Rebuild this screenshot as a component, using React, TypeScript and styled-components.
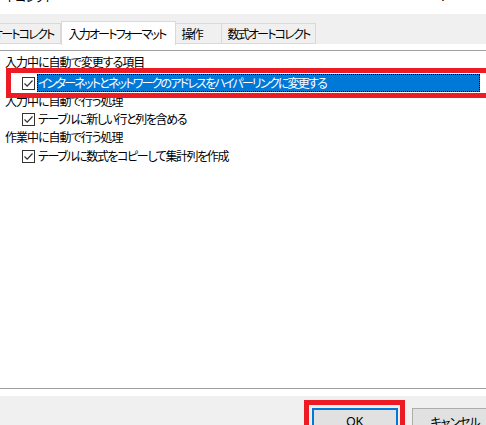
import React from 'react';
import styled, {createGlobalStyle} from 'styled-components';

const GlobalStyle = createGlobalStyle`
  html, body {
    margin: 0;
    padding: 0;
    width: 486px;
    height: 425px;
    overflow: hidden;
    background: #ffffff;
  }
  body {
    font-family: "Noto Sans CJK JP", "Liberation Sans", sans-serif;
    font-size: 12px;
    letter-spacing: -1px;
    color: #000000;
    font-feature-settings: "palt";
  }
`;

const Dialog = styled.div`
  width: 486px;
  height: 425px;
  display: flex;
  flex-direction: column;
  overflow: hidden;
`;

const TitleBar = styled.div`
  height: 14px;
  flex: none;
  display: flex;
  justify-content: space-between;
  overflow: hidden;
  background: #ffffff;
`;

const TitleText = styled.span`
  margin-top: -11px;
  margin-left: -14px;
  line-height: 16px;
  white-space: nowrap;
`;

const TitleButtons = styled.div`
  display: flex;
  gap: 32px;
  margin-top: -12px;
  margin-right: -4px;
  line-height: 16px;
  letter-spacing: 0;
`;

const TabStrip = styled.div`
  height: 30px;
  flex: none;
  background: #f0f0f0;
  display: flex;
  align-items: flex-end;
  position: relative;
  z-index: 1;
`;

const Tab = styled.div<{$active?: boolean; $lead?: boolean; $width?: number}>`
  height: ${p => (p.$active ? '24px' : '21px')};
  margin-bottom: ${p => (p.$active ? '-1px' : '0')};
  width: ${p => (p.$width ? `${p.$width}px` : 'auto')};
  box-sizing: border-box;
  padding: 0 6px 0 ${p => (p.$active ? '7px' : '6px')};
  padding-top: ${p => (p.$active ? '0' : '1px')};
  margin-left: ${p => (p.$lead ? '-14px' : '0')};
  background: ${p => (p.$active ? '#ffffff' : '#f0f0f0')};
  border: 1px solid #d9d9d9;
  border-bottom: ${p => (p.$active ? 'none' : '1px solid #d9d9d9')};
  border-left: ${p => (p.$active ? '1px solid #d9d9d9' : 'none')};
  display: flex;
  align-items: center;
  white-space: nowrap;
  line-height: 16px;
  letter-spacing: -1.8px;
`;

const TabGap = styled.div`
  height: 6px;
  flex: none;
  background: #ffffff;
  border-bottom: 1px solid #a0a0a0;
`;

const Panel = styled.div`
  flex: 1;
  background: #ffffff;
  padding: 2px 0 0 5px;
  display: flex;
  flex-direction: column;
`;

const GroupLabel = styled.div`
  height: 18px;
  line-height: 18px;
  white-space: nowrap;
`;

const OptionRow = styled.div<{$gapTop?: number}>`
  position: relative;
  height: 18px;
  margin-top: ${p => p.$gapTop ?? 0}px;
  padding-left: 17px;
  display: flex;
  align-items: center;
  gap: 2px;
  white-space: nowrap;
`;

const Box = styled.span`
  width: 13px;
  height: 13px;
  box-sizing: border-box;
  border: 1px solid #333333;
  background: #ffffff;
  display: flex;
  align-items: center;
  justify-content: center;
  flex: none;
`;

const Label = styled.span<{$selected?: boolean}>`
  line-height: 16px;
  letter-spacing: ${p => (p.$selected ? '-1.8px' : '-1.4px')};
  padding: 0 2px 0 1px;
  flex: ${p => (p.$selected ? 1 : 'none')};
  margin-right: ${p => (p.$selected ? '6px' : '0')};
  background: ${p => (p.$selected ? '#0078d7' : 'transparent')};
  color: ${p => (p.$selected ? '#ffffff' : '#000000')};
  outline: ${p => (p.$selected ? '1px dotted #000000' : 'none')};
  outline-offset: -1px;
  height: 18px;
  display: flex;
  align-items: center;
`;

const Highlight = styled.div<{$top: number; $left: number; $right: number; $bottom: number}>`
  position: absolute;
  top: ${p => p.$top}px;
  left: ${p => p.$left}px;
  right: ${p => p.$right}px;
  bottom: ${p => p.$bottom}px;
  border: 5px solid #ed1c24;
  pointer-events: none;
`;

const Footer = styled.div`
  height: 36px;
  flex: none;
  border-top: 1px solid #a0a0a0;
  background: #ffffff;
  display: flex;
  flex-direction: column;
`;

const FooterBand = styled.div`
  margin-top: 7px;
  flex: 1;
  background: #f0f0f0;
  display: flex;
  justify-content: flex-end;
  gap: 14px;
  padding-top: 12px;
  margin-right: -12px;
`;

const Button = styled.div<{$default?: boolean}>`
  position: relative;
  width: 86px;
  height: 24px;
  box-sizing: border-box;
  background: #e1e1e1;
  border: ${p => (p.$default ? '2px solid #0078d7' : '1px solid #adadad')};
  display: flex;
  align-items: center;
  justify-content: center;
  font-family: "Liberation Sans", "Noto Sans CJK JP", sans-serif;
  letter-spacing: ${p => (p.$default ? '0' : '-1px')};
  line-height: 16px;
  padding-top: ${p => (p.$default ? '3px' : '6px')};
`;

const Check = () => (
  <svg width="11" height="11" viewBox="0 0 11 11">
    <path d="M1.5 5.5 L4.2 8.2 L9.5 2.5" fill="none" stroke="#333333" strokeWidth="1.2" />
  </svg>
);

export default function App() {
  return (
    <>
      <GlobalStyle />
      <Dialog>
        <TitleBar>
          <TitleText>オートコレクト</TitleText>
          <TitleButtons>
            <span>?</span>
            <span>×</span>
          </TitleButtons>
        </TitleBar>
        <TabStrip>
          <Tab $lead>オートコレクト</Tab>
          <Tab $active $width={115}>入力オートフォーマット</Tab>
          <Tab $width={46}>操作</Tab>
          <Tab $width={94}>数式オートコレクト</Tab>
        </TabStrip>
        <TabGap />
        <Panel>
          <GroupLabel>入力中に自動で変更する項目</GroupLabel>
          <OptionRow $gapTop={3}>
            <Box>
              <Check />
            </Box>
            <Label $selected>インターネットとネットワークのアドレスをハイパーリンクに変更する</Label>
            <Highlight $top={-6} $left={1} $right={-10} $bottom={-6} />
          </OptionRow>
          <GroupLabel>入力中に自動で行う処理</GroupLabel>
          <OptionRow>
            <Box>
              <Check />
            </Box>
            <Label>テーブルに新しい行と列を含める</Label>
          </OptionRow>
          <GroupLabel>作業中に自動で行う処理</GroupLabel>
          <OptionRow $gapTop={1}>
            <Box>
              <Check />
            </Box>
            <Label>テーブルに数式をコピーして集計列を作成</Label>
          </OptionRow>
        </Panel>
        <Footer>
          <FooterBand>
            <Button $default>
              OK
              <Highlight $top={-10} $left={-10} $right={-9} $bottom={-20} />
            </Button>
            <Button>キャンセル</Button>
          </FooterBand>
        </Footer>
      </Dialog>
    </>
  );
}
